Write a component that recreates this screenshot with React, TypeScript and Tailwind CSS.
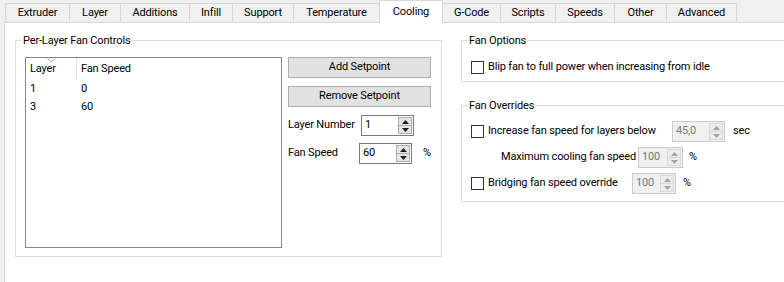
import type { ReactNode } from 'react';

const tabs = [
  { label: 'Extruder', w: 65 },
  { label: 'Layer', w: 52 },
  { label: 'Additions', w: 70 },
  { label: 'Infill', w: 44 },
  { label: 'Support', w: 62 },
  { label: 'Temperature', w: 87 },
  { label: 'Cooling', w: 64, active: true },
  { label: 'G-Code', w: 59 },
  { label: 'Scripts', w: 56 },
  { label: 'Speeds', w: 60 },
  { label: 'Other', w: 53 },
  { label: 'Advanced', w: 71 },
];

const setpoints = [
  { layer: '1', speed: '0' },
  { layer: '3', speed: '60' },
];

function Arrow({ up, disabled }: { up?: boolean; disabled?: boolean }) {
  return (
    <svg width="7" height="4" viewBox="0 0 7 4">
      <path d={up ? 'M0 4 L3.5 0 L7 4 Z' : 'M0 0 L3.5 4 L7 0 Z'} fill={disabled ? '#a3a3a3' : '#202020'} />
    </svg>
  );
}

function SpinBox({ value, width, disabled }: { value: string; width: string; disabled?: boolean }) {
  return (
    <div
      className={`flex h-[21px] shrink-0 border ${width} ${
        disabled ? 'border-[#cccccc] bg-[#f0f0f0] text-[#7a7a7a]' : 'border-[#7a7a7a] bg-white text-black'
      }`}
    >
      <div className="flex flex-1 items-center pl-[3px]">{value}</div>
      <div
        className={`my-[1px] mr-[1px] flex w-[14px] flex-col border ${
          disabled ? 'border-[#d9d9d9] bg-[#ececec]' : 'border-[#adadad] bg-[#e5e5e5]'
        }`}
      >
        <div className="flex flex-1 items-center justify-center">
          <Arrow up disabled={disabled} />
        </div>
        <div className={`h-px ${disabled ? 'bg-[#d9d9d9]' : 'bg-[#adadad]'}`} />
        <div className="flex flex-1 items-center justify-center">
          <Arrow disabled={disabled} />
        </div>
      </div>
    </div>
  );
}

function CheckBox() {
  return <div className="h-[13px] w-[13px] shrink-0 border border-[#333333] bg-white" />;
}

function GroupBox({ title, className, children }: { title: string; className: string; children: ReactNode }) {
  return (
    <fieldset className={`border border-[#dcdcdc] ${className}`}>
      <legend className="ml-[-3px] px-px leading-[15px]">{title}</legend>
      {children}
    </fieldset>
  );
}

function Button({ label }: { label: string }) {
  return (
    <div className="flex h-[21px] items-center justify-center border border-[#adadad] bg-[#e1e1e1]">{label}</div>
  );
}

export default function App() {
  return (
    <div
      className="flex h-[282px] w-[784px] flex-col overflow-hidden whitespace-nowrap bg-[#f0f0f0] text-[11px] tracking-[-0.15px] text-black"
      style={{ fontFamily: '"Segoe UI", Roboto, sans-serif' }}
    >
      <div className="flex h-[22px] items-end pl-[5px]">
        {tabs.map((t) =>
          t.active ? (
            <div
              key={t.label}
              style={{ width: t.w }}
              className="relative z-10 mb-[-1px] mr-[-1px] flex h-[23px] shrink-0 items-center justify-center border border-b-0 border-[#d9d9d9] bg-white"
            >
              {t.label}
            </div>
          ) : (
            <div
              key={t.label}
              style={{ width: t.w }}
              className="mr-[-1px] flex h-[19px] shrink-0 items-center justify-center border border-b-0 border-[#d9d9d9] bg-[#f0f0f0] pt-[1px]"
            >
              {t.label}
            </div>
          ),
        )}
      </div>

      <div className="ml-[4px] flex flex-1 border-l border-t border-[#d9d9d9] bg-white pl-[10px] pt-[10px]">
        <GroupBox title="Per-Layer Fan Controls" className="flex h-[224px] w-[427px] shrink-0 gap-[6px] pl-[9px] pr-[9px] pt-[9px]">
          <div className="flex h-[191px] w-[257px] shrink-0 flex-col border border-[#828790]">
            <div className="flex h-[22px]">
              <div className="relative flex w-[50px] items-center pl-[4px] pt-[1px]">
                <svg className="absolute left-[21px] top-0" width="9" height="5" viewBox="0 0 9 5">
                  <path d="M0.5 0.5 L4.5 4 L8.5 0.5" fill="none" stroke="#a8a8a8" strokeWidth="1" />
                </svg>
                Layer
              </div>
              <div className="w-px bg-[#e5e5e5]" />
              <div className="flex flex-1 items-center pl-[4px] pt-[1px]">Fan Speed</div>
            </div>
            {setpoints.map((s) => (
              <div key={s.layer} className="flex h-[18px] items-center">
                <div className="w-[51px] pl-[4px]">{s.layer}</div>
                <div className="pl-[4px]">{s.speed}</div>
              </div>
            ))}
          </div>

          <div className="flex w-[143px] flex-col">
            <Button label="Add Setpoint" />
            <div className="mt-[8px]">
              <Button label="Remove Setpoint" />
            </div>
            <div className="mt-[8px] flex items-center">
              <div className="w-[73px]">Layer Number</div>
              <SpinBox value="1" width="w-[53px]" />
            </div>
            <div className="mt-[7px] flex items-center">
              <div className="w-[73px]">Fan Speed</div>
              <SpinBox value="60" width="w-[53px]" />
              <div className="ml-[11px]">%</div>
            </div>
          </div>
        </GroupBox>

        <div className="ml-[19px] flex w-[330px] shrink-0 flex-col">
          <GroupBox title="Fan Options" className="pb-[7px] pl-[9px] pt-[12px]">
            <div className="flex h-[14px] items-center gap-[4px]">
              <CheckBox />
              <span>Blip fan to full power when increasing from idle</span>
            </div>
          </GroupBox>

          <GroupBox title="Fan Overrides" className="mt-[16px] flex flex-col gap-[5px] pb-[7px] pl-[9px] pt-[8px]">
            <div className="flex h-[21px] items-center">
              <CheckBox />
              <span className="w-[188px] shrink-0 pl-[4px]">Increase fan speed for layers below</span>
              <SpinBox value="45,0" width="w-[53px]" disabled />
              <span className="ml-[8px]">sec</span>
            </div>
            <div className="flex h-[21px] items-center">
              <span className="w-[167px] shrink-0 pl-[30px]">Maximum cooling fan speed</span>
              <SpinBox value="100" width="w-[45px]" disabled />
              <span className="ml-[6px]">%</span>
            </div>
            <div className="flex h-[21px] items-center">
              <CheckBox />
              <span className="w-[148px] shrink-0 pl-[4px]">Bridging fan speed override</span>
              <SpinBox value="100" width="w-[44px]" disabled />
              <span className="ml-[7px]">%</span>
            </div>
          </GroupBox>
        </div>
      </div>
    </div>
  );
}
